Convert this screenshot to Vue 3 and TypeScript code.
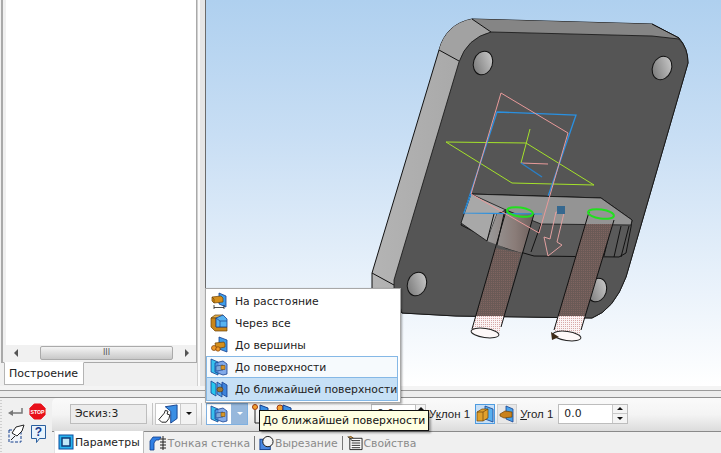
<script setup lang="ts">
interface MenuItem { label: string; icon: string; state: string }
interface TabItem { label: string; icon: string; active: boolean; sep: boolean; w: number }

const menuItems: MenuItem[] = [
  { label: 'На расстояние', icon: '#i-dist', state: '' },
  { label: 'Через все', icon: '#i-through', state: '' },
  { label: 'До вершины', icon: '#i-vertex', state: '' },
  { label: 'До поверхности', icon: '#i-surface', state: 'hover' },
  { label: 'До ближайшей поверхности', icon: '#i-nearest', state: 'current' },
]
const tabs: TabItem[] = [
  { label: 'Параметры', icon: '#t-params', active: true, sep: false, w: 16 },
  { label: 'Тонкая стенка', icon: '#t-wall', active: false, sep: true, w: 18 },
  { label: 'Вырезание', icon: '#t-cut', active: false, sep: true, w: 15 },
  { label: 'Свойства', icon: '#t-props', active: false, sep: false, w: 16 },
]
</script>

<template>
  <div class="app">
    <svg class="defs" aria-hidden="true">
      <symbol id="i-dist" viewBox="0 0 18 18">
        <path d="M9 1l7 3v11l-7-3z" fill="#3d9be8" stroke="#16408f" stroke-width=".8"/>
        <path d="M2 5l9-1 2 2v4l-9 1-2-2z" fill="#d58f1c" stroke="#6b4208" stroke-width=".7"/>
        <path d="M2 5l2 2v4" fill="none" stroke="#6b4208" stroke-width=".7"/>
        <path d="M4 13v4M14 13v4M4 15.500h10" stroke="#222" stroke-width=".8" fill="none"/>
      </symbol>
      <symbol id="i-through" viewBox="0 0 18 18">
        <path d="M1 4l4-3h8l-3 3z" fill="#e6b14c" stroke="#6b4208" stroke-width=".7"/>
        <path d="M1 4h5v9h11v4H5l-4-4z" fill="#c9861a" stroke="#6b4208" stroke-width=".7"/>
        <path d="M6 4l7-3 4 4v8H6z" fill="#58b3f0" stroke="#16408f" stroke-width=".8"/>
        <path d="M6 4l4 3h7M10 7v6" fill="none" stroke="#16408f" stroke-width=".7"/>
      </symbol>
      <symbol id="i-vertex" viewBox="0 0 18 18">
        <path d="M9 1l8 3v12l-8-3z" fill="#3d9be8" stroke="#16408f" stroke-width=".8"/>
        <path d="M5 7l9-1 1 2v3l-9 2z" fill="#d58f1c" stroke="#6b4208" stroke-width=".7"/>
        <circle cx="4" cy="12" r="2.500" fill="#ef9a2a" stroke="#7a3b06" stroke-width=".7"/>
        <circle cx="8" cy="13" r="2.200" fill="#ef9a2a" stroke="#7a3b06" stroke-width=".7"/>
      </symbol>
      <symbol id="i-surface" viewBox="0 0 18 18">
        <path d="M1 1l7 3v13l-7-3z" fill="#38c0ee" stroke="#16408f" stroke-width=".8"/>
        <path d="M5 5l8-2 4 3v10l-4 1-8-3z" fill="#5b8fe0" fill-opacity=".75" stroke="#16408f" stroke-width=".8"/>
        <path d="M6 8l7-1v5l-7 1z" fill="#7fa8d8" stroke="#16408f" stroke-width=".6"/>
        <path d="M11 7.500h4v4h-4z" fill="#d89628" stroke="#6b4208" stroke-width=".5"/>
      </symbol>
      <symbol id="i-nearest" viewBox="0 0 18 18">
        <path d="M1 1l5 3v12l-5-3z" fill="#27c7ee" stroke="#16408f" stroke-width=".8"/>
        <path d="M7 2l5 3v12l-5-3z" fill="#4fa4ea" stroke="#16408f" stroke-width=".8"/>
        <path d="M12 2l5 3v12l-5-3z" fill="#3d83da" stroke="#16408f" stroke-width=".8"/>
        <ellipse cx="10" cy="9.500" rx="3" ry="2.500" fill="#a3782e" stroke="#4c3a1a" stroke-width=".6"/>
      </symbol>
      <symbol id="b-sketch" viewBox="0 0 24 22">
        <path d="M9 3l13-2v15l-7 5V8z" fill="#3b8fe4" stroke="#123d8a"/>
        <path d="M2 17l6-7 1-3 3 1-1 3 3 1-1 4-3 4H5z" fill="#fff" stroke="#111"/>
      </symbol>
      <symbol id="b-draft1" viewBox="0 0 18 18">
        <path d="M9 1l8 3v13l-8-3z" fill="#58b0ef" stroke="#16408f" stroke-width=".8"/>
        <path d="M1 7l5-3h6v9l-5 3H1z" fill="#e0a02c" stroke="#6b4208" stroke-width=".7"/>
        <path d="M1 7h6v9M7 7l5-3" fill="none" stroke="#6b4208" stroke-width=".7"/>
      </symbol>
      <symbol id="b-draft2" viewBox="0 0 18 18">
        <path d="M8 1l7 3v13l-7-3z" fill="#4aa3ea" stroke="#16408f" stroke-width=".8"/>
        <path d="M2 9l5-3 7 1v5l-8 1-4-2z" fill="#c9821d" stroke="#6b4208" stroke-width=".7"/>
      </symbol>
      <symbol id="t-params" viewBox="0 0 16 16">
        <rect x="1" y="1" width="14" height="14" fill="#28b4ee" stroke="#0c4fa0"/>
        <rect x="4" y="4" width="8" height="8" fill="#bfe8f8" stroke="#0c3a78" stroke-width="1.500"/>
      </symbol>
      <symbol id="t-wall" viewBox="0 0 18 16">
        <path d="M1 15V6l3-4h8l-2 3H7L5 8v7z" fill="#2f7fe4" stroke="#0c3a88" stroke-width=".8"/>
        <path d="M14 1v14M11 4h6M11 7h6M11 10h6M11 13h6" stroke="#222" fill="none"/>
      </symbol>
      <symbol id="t-cut" viewBox="0 0 16 16">
        <rect x="1" y="4" width="11" height="11" fill="#4a88e0" stroke="#123d8a"/>
        <circle cx="9.500" cy="6.500" r="5.500" fill="#f4f4f4" stroke="#111"/>
      </symbol>
      <symbol id="t-props" viewBox="0 0 17 16">
        <path d="M1 2l3-1 3 2" fill="#e0a02c" stroke="#7a4a0a"/>
        <path d="M3 3h13v12H3z" fill="#fff" stroke="#222"/>
        <path d="M5 5.500h9M5 8h9M5 10.500h9M5 13h9" stroke="#222"/>
        <path d="M1 1l5 5" stroke="#222"/>
      </symbol>
    </svg>

    <div class="workspace">
      <aside class="side">
        <div class="tree">
          <div class="tree-body"></div>
          <div class="hscroll">
            <span class="arrow-l"></span>
            <span class="thumb">III</span>
            <span class="arrow-r"></span>
          </div>
        </div>
        <div class="side-tab">Построение</div>
      </aside>
      <div class="splitter"></div>
      <main class="viewport">
        <svg class="scene" viewBox="207 0 514 386" width="514" height="386">
          <defs>
            <pattern id="dotsA" width="2" height="2" patternUnits="userSpaceOnUse">
              <rect width="2" height="2" fill="#6a5a56"/>
              <rect width="1" height="1" fill="#7f6460"/>
            </pattern>
            <pattern id="dotsB" width="2" height="2" patternUnits="userSpaceOnUse">
              <rect width="2" height="2" fill="#fbf4f4"/>
              <rect width="1" height="1" fill="#d8a8a8"/>
            </pattern>
            <linearGradient id="holeG" x1="0" y1="1" x2="1" y2="0">
              <stop offset="0" stop-color="#6f6f6f"/>
              <stop offset="1" stop-color="#d2d2d2"/>
            </linearGradient>
            <linearGradient id="sideG" x1="0" y1="0" x2="1" y2="0">
              <stop offset="0" stop-color="#b4b4b4"/>
              <stop offset="1" stop-color="#8c8c8c"/>
            </linearGradient>
            <linearGradient id="blockG" x1="0" y1="0" x2="1" y2="0">
              <stop offset="0" stop-color="#9a9a9a"/>
              <stop offset=".6" stop-color="#8a7c78"/>
              <stop offset="1" stop-color="#6c5f5c"/>
            </linearGradient>
          </defs>

          <!-- plate -->
          <path d="M473 19 L653 24 L680 38 Q689 48 689 63 L658 170 L627 277 Q615 310 593 318 L457 316 L403 313 L373 290 L373 273 L440 50 Q447 24 473 19Z" fill="url(#sideG)" stroke="#111" stroke-width="1"/>
          <path d="M473 19 L492 32 L653 36 L680 38 L653 24Z" fill="#858585"/>
          <path d="M473 19 Q447 24 440 50 L460 61 Q466 40 492 32Z" fill="#a2a2a2"/>
          <path d="M492 32 L653 36 L680 39 Q689 48 689 63 L658 170 L627 277 Q615 310 593 318 L457 316 L403 313 L395 288 L395 280 L460 62 Q468 38 492 32Z" fill="#555" stroke="#111" stroke-width=".8"/>
          <path d="M473 19 L492 32 M653 24 L680 38 M440 50 L460 61 M373 273 L395 285" stroke="#111" fill="none"/>
          <ellipse cx="484" cy="63" rx="9.500" ry="12" transform="rotate(18 484 63)" fill="url(#holeG)" stroke="#111"/>
          <ellipse cx="663" cy="68" rx="9.500" ry="12" transform="rotate(22 663 68)" fill="url(#holeG)" stroke="#111"/>
          <ellipse cx="418" cy="284" rx="9.500" ry="12" transform="rotate(18 418 284)" fill="url(#holeG)" stroke="#111"/>
          <ellipse cx="598" cy="290" rx="9.500" ry="12" transform="rotate(18 598 290)" fill="url(#holeG)" stroke="#111"/>

          <!-- sketch planes -->
          <path d="M447 142 L527 143 L595 185 L513 183Z" fill="none" stroke="#a4e22a"/>
          <path d="M531 129 L522 163" stroke="#a4e22a" fill="none"/>
          <path d="M522 163 L549 164" stroke="#e79a9a" fill="none"/>
          <path d="M522 163 L543 177" stroke="#2a80c8" fill="none" stroke-width="1.300"/>
          <path d="M498 112 L577 115 L543 214 L465 213Z" fill="none" stroke="#2a90e0" stroke-width="1.300"/>

          <!-- boss -->
          <path d="M472 194 L602 198 L633 220 L632 227 L627 253 L620 257 L535 256 L507 248 L462 225Z" fill="#5a5a5a" stroke="#111"/>
          <path d="M472 194 L602 198 L633 220 L632 225 L542 224 L507 210 L465 213Z" fill="#949494" stroke="#111" stroke-width=".8"/>
          <path d="M472 194 L462 223 L488 241 L498 214 L507 210Z" fill="#a8a8a8" stroke="#111" stroke-width=".8"/>
          <path d="M488 241 L498 214 L535 213 L523 253 L507 248Z" fill="url(#blockG)"/>
          <path d="M472 194 L465 213 L543 214" stroke="#2a90e0" fill="none" stroke-width="1.200"/>
          <path d="M495 214 L488 241 M505 214 L498 245 M532 252 L542 224 M622 257 L630 226 M615 257 L622 226 M605 256 L612 226" stroke="#111" fill="none"/>

          <!-- rods -->
          <path d="M496 248 L477 316 L505 316 L522 253Z" fill="url(#dotsA)"/>
          <path d="M586 224 L559 316 L586 316 L614 224Z" fill="url(#dotsA)"/>
          <path d="M477 316 L473 329 L486 338 L500 334 L505 316Z" fill="url(#dotsB)"/>
          <path d="M559 316 L555 330 L567 341 L579 340 L586 316Z" fill="url(#dotsB)"/>
          <path d="M507 211 L473 329 M535 214 L502 327 M590 212 L555 330 M615 220 L582 330" stroke="#111" fill="none"/>
          <ellipse cx="486" cy="333" rx="14" ry="4.500" transform="rotate(8 486 333)" fill="#fdf8f8" stroke="#222"/>
          <ellipse cx="568" cy="336" rx="14" ry="4.500" transform="rotate(8 568 336)" fill="#fdf8f8" stroke="#222"/>
          <path d="M552 332 L560 337 L553 340Z" fill="#3d2a18"/>
          <ellipse cx="521" cy="212" rx="13" ry="4.500" transform="rotate(8 521 212)" fill="none" stroke="#22e01e" stroke-width="2"/>
          <ellipse cx="602" cy="214" rx="13" ry="4.500" transform="rotate(8 602 214)" fill="none" stroke="#22e01e" stroke-width="2"/>

          <!-- pink frame + direction arrow -->
          <path d="M502 93 L569 133 L540 233 L472 194Z" fill="none" stroke="#e89a9a"/>
          <path d="M557 212 L565 213 L558 242 L563 245 L549 256 L545 237 L551 239Z" fill="none" stroke="#e2a0a0"/>
          <rect x="558" y="206" width="8" height="8" fill="#36688f"/>
        </svg>
      </main>
    </div>

    <div class="band"></div>

    <div class="bottom">
      <div class="side-tools">
        <div class="tool-row">
          <svg width="15" height="10" viewBox="0 0 15 10"><path d="M4 7h10V2" stroke="#777" stroke-width="1.500" fill="none"/><path d="M5 4L0 7l5 3z" fill="#777"/></svg>
          <svg width="17" height="17" viewBox="0 0 18 18"><path d="M5.500 1h7L17 5.500v7L12.500 17h-7L1 12.500v-7z" fill="#e8101a" stroke="#e8101a" stroke-linejoin="round"/><text x="9" y="11.300" class="stop-text" text-anchor="middle">STOP</text></svg>
        </div>
        <div class="tool-row">
          <svg width="17" height="20" viewBox="0 0 17 20"><rect x="1" y="6" width="12" height="12" fill="#eef2f8" stroke="#123d8a" stroke-dasharray="3 1.500"/><path d="M4 9l4-6 8-2-2 6-5 5z" fill="#fff" stroke="#222"/><path d="M3 16l4-4" stroke="#222"/></svg>
          <svg class="help" width="17" height="20" viewBox="0 0 17 20"><path d="M1.500 1.500h14v13h-6l-3 4v-4h-5z" fill="#e8f3fc" stroke="#2a5f9e"/><text x="8.500" y="12" class="help-text" text-anchor="middle">?</text></svg>
        </div>
      </div>

      <div class="right">
        <div class="toolbar">
          <div class="field name">Эскиз:3</div>
          <i class="sep"></i>
          <div class="combo">
            <svg width="24" height="20" viewBox="0 0 24 22"><use href="#b-sketch"/></svg>
            <span class="drop"><b class="tri"></b></span>
          </div>
          <i class="sep second"></i>
          <div class="combo on">
            <svg width="18" height="18"><use href="#i-surface"/></svg>
            <span class="drop"><b class="tri white"></b></span>
          </div>
          <div class="minis">
            <svg width="20" height="22" viewBox="0 0 20 22"><circle cx="4" cy="4" r="2.500" fill="#f2a030" stroke="#a03a10"/><path d="M4 7v13h12" stroke="#222" fill="none"/><path d="M9 2l8 3v8l-8-3z" fill="#3b8fe4" stroke="#123d8a"/></svg>
            <svg width="20" height="22" viewBox="0 0 20 22"><circle cx="7" cy="5" r="3" fill="#f2a030" stroke="#a03a10"/><path d="M10 2l8 3v8l-8-3z" fill="#3b8fe4" stroke="#123d8a"/></svg>
          </div>
          <div class="field num depth"><span>0.0</span></div>
          <span class="spin small"><b class="up"></b><b class="down"></b></span>
          <span class="lbl">У<u>к</u>лон 1</span>
          <span class="tb active"><svg width="18" height="18"><use href="#b-draft1"/></svg></span>
          <span class="tb"><svg width="18" height="18"><use href="#b-draft2"/></svg></span>
          <span class="lbl"><u>У</u>гол 1</span>
          <div class="field num angle">
            <span>0.0</span>
            <span class="spin"><b class="up"></b><b class="down"></b></span>
          </div>
        </div>
        <div class="tabs">
          <template v-for="t in tabs" :key="t.label">
            <div class="tab" :class="{ active: t.active }">
              <svg :width="t.w" height="16"><use :href="t.icon"/></svg>
              <span>{{ t.label }}</span>
            </div>
            <i v-if="t.sep" class="tab-sep"></i>
          </template>
        </div>
      </div>
    </div>

    <div class="menu">
      <div v-for="m in menuItems" :key="m.label" class="item" :class="m.state">
        <svg width="18" height="18"><use :href="m.icon"/></svg>
        <span>{{ m.label }}</span>
      </div>
    </div>

    <div class="tooltip">До ближайшей поверхности</div>
  </div>
</template>

<style>
html, body { margin: 0; overflow: hidden; }
</style>

<style scoped>
.app {
  position: relative;
  width: 721px;
  height: 453px;
  overflow: hidden;
  display: flex;
  flex-direction: column;
  background: #f0f0f0;
  font-family: "DejaVu Sans", sans-serif;
  font-size: 10.800px;
  color: #222;
}
.defs { position: absolute; width: 0; height: 0; }
svg { flex: none; }
.workspace { display: flex; height: 386px; flex: none; }
.side {
  width: 197px;
  flex: none;
  display: flex;
  flex-direction: column;
  box-sizing: border-box;
  padding-left: 1px;
}
.tree {
  height: 363px;
  flex: none;
  box-sizing: border-box;
  display: flex;
  flex-direction: column;
  border: solid #a9a9a9;
  border-width: 0 1px 1px 1px;
  border-left-width: 2px;
  padding: 0 0 0 3px;
  background: #f0f0f0;
}
.tree-body { flex: 1; background: #fff; }
.hscroll {
  height: 16px;
  flex: none;
  display: flex;
  align-items: center;
  background: #f1f1f1;
  padding: 0 7px 0 8px;
  margin-bottom: 1px;
}
.arrow-l { width: 0; height: 0; border: 4px solid transparent; border-right: 4px solid #555; border-left-width: 0; }
.arrow-r { width: 0; height: 0; border: 4px solid transparent; border-left: 4px solid #555; border-right-width: 0; }
.thumb {
  flex: 1;
  margin: 0 12px 0 22px;
  height: 14px;
  box-sizing: border-box;
  border: 1px solid #aaa;
  border-radius: 2px;
  background: linear-gradient(#f4f4f4, #c8c8c8);
  font-size: 8px;
  line-height: 12px;
  text-align: center;
  color: #555;
}
.side-tab {
  width: 80px;
  height: 23px;
  margin-left: 3px;
  margin-top: -1px;
  box-sizing: border-box;
  background: #fff;
  border: 1px solid #b4b4b4;
  border-top-color: #fff;
  font-size: 11px;
  line-height: 22px;
  padding-left: 4px;
  color: #222;
}
.splitter {
  width: 9px;
  flex: none;
  box-sizing: border-box;
  background: #e6e6e6;
  border-left: 1px solid #d0d0d0;
  border-right: 1px solid #6a6a6a;
  box-shadow: inset 2px 0 0 #fafafa;
}
.viewport {
  flex: 1;
  background: linear-gradient(#afd0ef 0%, #c8def4 35%, #e6f0fa 70%, #ffffff 100%);
  overflow: hidden;
}
.scene { display: block; }
.band {
  height: 12px;
  flex: none;
  box-sizing: border-box;
  background: #ededed;
  border-top: 4px solid #f4f4f4;
  border-bottom: 1px solid #8f8f8f;
  box-shadow: inset 0 1px 0 #9a9a9a;
}
.bottom { flex: 1; display: flex; min-height: 0; }
.side-tools {
  width: 52px;
  flex: none;
  box-sizing: border-box;
  padding: 3px 0 0 8px;
  display: flex;
  flex-direction: column;
  gap: 3px;
  background: repeating-linear-gradient(#f0f0f0 0 2px, #cfcfcf 2px 3px) 0 0 / 2px 100% no-repeat #f0f0f0;
}
.tool-row { display: flex; align-items: center; gap: 6px; height: 20px; }
.help { margin-left: -1px; }
.stop-text { font: bold 5.500px "Liberation Sans", sans-serif; fill: #fff; }
.help-text { font: bold 12px "Liberation Sans", sans-serif; fill: #173a8c; }
.right { flex: 1; display: flex; flex-direction: column; min-width: 0; }
.toolbar {
  height: 34px;
  flex: none;
  box-sizing: border-box;
  display: flex;
  align-items: center;
  padding-left: 18px;
  padding-bottom: 2px;
  background: linear-gradient(#fafafa, #f4f4f4 50%, #dcdcdc);
  border-bottom: 1px solid #8a8a8a;
  border-top-left-radius: 5px;
}
.field {
  height: 20px;
  box-sizing: border-box;
  border: 1px solid #bdbdbd;
  line-height: 18px;
  flex: none;
}
.name { width: 77px; background: #ececec; padding-left: 4px; }
.sep { width: 1px; height: 22px; background: #c4c4c4; margin: 0 0 0 5px; flex: none; }
.sep.second { margin-left: 4px; }
.combo {
  display: flex;
  align-items: center;
  height: 22px;
  box-sizing: border-box;
  flex: none;
  margin-left: 2px;
  width: 42px;
  background: #fff;
  border: 1px solid #c8c8c8;
}
.combo .drop {
  margin-left: auto;
  width: 16px;
  height: 100%;
  display: flex;
  align-items: center;
  justify-content: center;
  border-left: 1px solid #c8c8c8;
  background: #f2f2f2;
  box-sizing: border-box;
}
.combo.on {
  margin-left: 4px;
  padding-left: 3px;
  background: #fff;
  border-color: #7fb0e0;
  width: 42px;
}
.combo.on .drop { background: #97b8dc; border-left-color: #97b8dc; }
.tri { width: 0; height: 0; border: 3px solid transparent; border-top: 3px solid #111; border-bottom-width: 0; }
.tri.white { border-top-color: #fff; }
.minis { display: flex; align-items: center; gap: 2px; margin-left: 3px; width: 120px; flex: none; }
.num { background: #fff; padding-left: 5px; }
.depth { width: 45px; }
.spin {
  display: flex;
  flex-direction: column;
  width: 15px;
  height: 100%;
  box-sizing: border-box;
  border-left: 1px solid #c8c8c8;
  background: #f4f4f4;
  position: absolute;
  right: 0;
  top: 0;
}
.spin.small { position: static; height: 20px; width: 10px; border: 1px solid #c8c8c8; border-left: 0; flex: none; }
.spin b { flex: 1; display: flex; align-items: center; justify-content: center; }
.spin b.up { border-bottom: 1px solid #c8c8c8; }
.spin b.up::after { content: ""; border: 3px solid transparent; border-bottom: 3px solid #111; border-top-width: 0; }
.spin b.down::after { content: ""; border: 3px solid transparent; border-top: 3px solid #111; border-bottom-width: 0; }
.lbl { margin-left: 3px; white-space: nowrap; font: 11.500px "Liberation Sans", sans-serif; flex: none; }
.tb {
  width: 20px;
  height: 20px;
  box-sizing: border-box;
  margin-left: 2px;
  flex: none;
  display: flex;
  align-items: center;
  justify-content: center;
  background: #e8e8e8;
  border: 1px solid #cfcfcf;
}
.lbl + .tb { margin-left: 5px; }
.tb.active { background: #c6dff6; border-color: #4d9be0; }
.angle { position: relative; width: 70px; margin-left: 5px; }
.tabs { flex: 1; display: flex; align-items: stretch; padding-left: 2px; }
.tab {
  display: flex;
  align-items: center;
  gap: 1px;
  padding: 0 4px;
  color: #8a8a8a;
  white-space: nowrap;
  margin-top: 1px;
}
.tab.active {
  color: #222;
  background: #fff;
  padding-left: 3px;
  padding-right: 3px;
  border-right: 1px solid #bcbcbc;
  border-left: 1px solid #e2e2e2;
  margin-top: -1px;
  margin-right: 1px;
}
.tab-sep { width: 1px; height: 14px; background: #777; align-self: center; flex: none; }
.menu {
  position: absolute;
  left: 205px;
  top: 288px;
  width: 196px;
  height: 115px;
  box-sizing: border-box;
  background: #fff;
  border: 1px solid #a8a8a8;
  padding: 1px 2px 1px 0;
  box-shadow: 1px 1px 2px rgba(0,0,0,.35);
}
.item {
  height: 22px;
  display: flex;
  align-items: center;
  gap: 7px;
  padding-left: 4px;
  box-sizing: border-box;
  white-space: nowrap;
  color: #222;
}
.item.hover { background: #f6fafd; border: 1px solid #85b8e6; padding-left: 3px; }
.item.current { background: #c6e0f6; border: 1px solid #85b8e6; border-top: 0; padding-left: 3px; height: 23px; }
.tooltip {
  position: absolute;
  left: 259px;
  top: 410px;
  height: 21px;
  box-sizing: border-box;
  padding: 0 3px;
  line-height: 19px;
  background: #ffffe1;
  border: 1px solid #111;
  box-shadow: 2px 2px 2px rgba(0,0,0,.35);
  color: #111;
  white-space: nowrap;
}
</style>
